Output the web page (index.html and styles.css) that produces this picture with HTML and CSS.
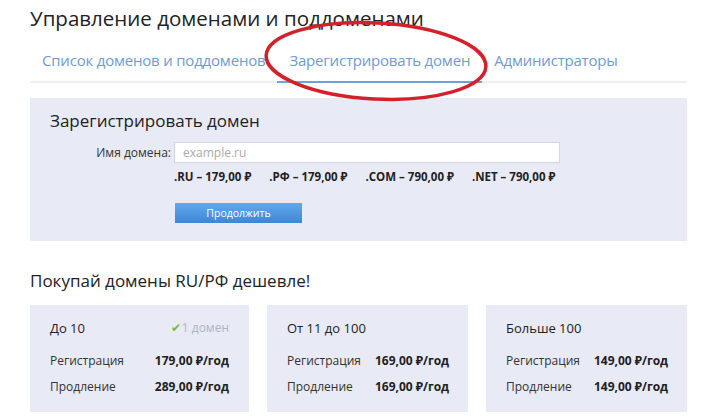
FILE: index.html
```html
<!DOCTYPE html>
<html lang="ru">
<head>
<meta charset="utf-8">
<title>Управление доменами и поддоменами</title>
<link rel="stylesheet" href="styles.css">
</head>
<body>
<div class="page">
    <h1 class="page-title">Управление доменами и поддоменами</h1>

    <ul class="tabs">
        <li><a href="#">Список доменов и поддоменов</a></li>
        <li class="on"><a href="#">Зарегистрировать домен</a></li>
        <li><a href="#">Администраторы</a></li>
    </ul>

    <div class="reg-box">
        <h2 class="reg-title">Зарегистрировать домен</h2>
        <div class="reg-form">
            <label class="reg-label" for="domain">Имя домена:</label>
            <input class="reg-input" id="domain" type="text" placeholder="example.ru">
            <div class="zones">
                <span>.RU – 179,00 ₽</span>
                <span>.РФ – 179,00 ₽</span>
                <span>.COM – 790,00 ₽</span>
                <span>.NET – 790,00 ₽</span>
            </div>
            <div class="reg-actions">
                <button class="btn-blue" type="button">Продолжить</button>
            </div>
        </div>
    </div>

    <h3 class="promo-title">Покупай домены RU/РФ дешевле!</h3>
    <div class="cards">
        <div class="card card-first">
            <div class="card-head">
                <span>До 10</span>
                <span class="card-note"><span class="check">✔</span>1 домен</span>
            </div>
            <span class="card-label">Регистрация</span><b class="card-price">179,00 ₽/год</b>
            <span class="card-label">Продление</span><b class="card-price">289,00 ₽/год</b>
        </div>
        <div class="card">
            <div class="card-head"><span>От 11 до 100</span></div>
            <span class="card-label">Регистрация</span><b class="card-price">169,00 ₽/год</b>
            <span class="card-label">Продление</span><b class="card-price">169,00 ₽/год</b>
        </div>
        <div class="card">
            <div class="card-head"><span>Больше 100</span></div>
            <span class="card-label">Регистрация</span><b class="card-price">149,00 ₽/год</b>
            <span class="card-label">Продление</span><b class="card-price">149,00 ₽/год</b>
        </div>
    </div>

    <!-- красная обводка поверх вкладки -->
    <svg class="mark" width="715" height="120" viewBox="0 0 715 120">
        <ellipse cx="376" cy="61" rx="110" ry="38" transform="rotate(3 376 61)" fill="none" stroke="#d3212b" stroke-width="3.5"/>
    </svg>
</div>
</body>
</html>
```

FILE: styles.css
```css
body{
    margin:0;
    background:#fff;
    font-family:"Open Sans", "Noto Sans", sans-serif;
    color:#222;
}
.page{
    position:relative;
    width:657px;
    padding:0 28px 0 30px;
}
.page-title{
    margin:0;
    padding-top:4px;
    font-size:20.5px;
    font-weight:400;
    line-height:28px;
    color:#222;
}
.tabs{
    display:flex;
    margin:17px 0 0;
    padding:0;
    list-style:none;
    border-bottom:2px solid #eef0f6;
}
.tabs li{
    padding:0 12px 10px;
    margin-bottom:-2px;
    border-bottom:2px solid transparent;
}
.tabs li.on{
    border-bottom-color:#6fa3d8;
}
.tabs a{
    font-size:15px;
    line-height:22px;
    color:#6e9bd0;
    text-decoration:none;
    letter-spacing:-0.2px;
}
.reg-box{
    margin-top:15px;
    padding:11px 20px 18px;
    background:#e8eaf5;
}
.reg-title{
    margin:0 0 9px;
    font-size:17px;
    font-weight:400;
    line-height:24px;
    color:#222;
}
.reg-form{
    display:grid;
    grid-template-columns:121px 386px;
    column-gap:3px;
    align-items:center;
}
.reg-label{
    text-align:right;
    font-size:12px;
    color:#333;
}
.reg-input{
    box-sizing:border-box;
    height:21px;
    margin:0;
    padding:0 8px;
    border:1px solid #d3d6df;
    background:#fff;
    font-family:inherit;
    font-size:12px;
}
.reg-input::placeholder{color:#aaa;}
.zones{
    grid-column:2;
    display:flex;
    gap:18px;
    padding-top:6px;
    font-size:11.5px;
    font-weight:700;
    line-height:16px;
    color:#222;
}
.zones span{white-space:nowrap;}
.reg-actions{
    grid-column:2;
    padding-top:18px;
}
.btn-blue{
    display:block;
    width:127px;
    height:20px;
    margin-left:1px;
    padding:0;
    border:0;
    background:linear-gradient(#62a9ec, #3d86d8);
    color:#fff;
    font-family:inherit;
    font-size:10.5px;
    line-height:20px;
}
.promo-title{
    margin:28px 0 0;
    font-size:17px;
    font-weight:400;
    line-height:24px;
    color:#222;
}
.cards{
    display:flex;
    gap:18px;
    margin-top:12px;
}
.card{
    box-sizing:border-box;
    width:201px;
    height:107px;
    padding:14px 20px 0;
    background:#e8eaf5;
    display:grid;
    grid-template-columns:auto auto;
    grid-template-rows:29px 26px 26px;
    justify-content:space-between;
    align-content:start;
    font-size:12px;
    line-height:18px;
    color:#333;
}
.card-first{width:219px;}
.card-head{
    grid-column:1 / 3;
    align-self:start;
    display:flex;
    justify-content:space-between;
    font-size:13px;
    color:#222;
}
.card-note{
    font-size:12px;
    color:#b0b4c0;
}
.check{color:#77bb44; margin-right:1px;}
.card-label{align-self:center; white-space:nowrap;}
.card-price{
    align-self:center;
    margin-left:14px;
    color:#222;
    text-align:right;
    white-space:nowrap;
}
.mark{
    position:absolute;
    left:0;
    top:0;
    pointer-events:none;
}
```
